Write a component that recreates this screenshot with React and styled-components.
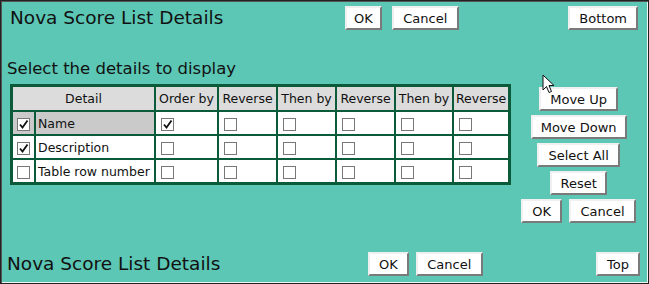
import React from "react"
import styled, { createGlobalStyle } from "styled-components"

const Global = createGlobalStyle`
    body {
        margin: 0;
        font-family: "DejaVu Sans", Verdana, sans-serif;
    }
`

const Pagina = styled.div`
    position: relative;
    box-sizing: border-box;
    width: 649px;
    height: 284px;
    background-color: #5cc7b5;
    border: 1px solid #222;
    box-shadow: inset 1px 1px 0 #555, inset -1px -1px 0 #f4f4f4;
    display: flex;
    flex-direction: column;
    color: #111;
`

const BarraTopo = styled.div`
    display: grid;
    grid-template-columns: 335px auto 1fr auto;
    align-items: center;
    padding: 5px 10px 0 9px;
`

const BarraBaixo = styled.div`
    display: grid;
    grid-template-columns: 361px auto 1fr auto;
    align-items: center;
    padding: 0 8px 7px 6px;
    margin-top: auto;
`

const Titulo = styled.div`
    font-size: 18.5px;
    line-height: 24px;
`

const Grupo = styled.div`
    display: flex;
    gap: ${p => p.gap || 7}px;
    justify-content: ${p => p.centro ? "center" : "flex-start"};
`

const Botao = styled.button`
    box-sizing: border-box;
    height: 24px;
    padding: 0 ${p => p.pad || 7}px;
    font-family: "DejaVu Sans", Verdana, sans-serif;
    font-size: 13px;
    color: #111;
    background: #fff;
    border: 2px solid;
    border-color: #f0f0f0 #7a7a7a #7a7a7a #f0f0f0;
    cursor: default;
`

const Meio = styled.div`
    display: flex;
    padding: 29px 0 0 6px;
`

const Secao = styled.div`
    display: flex;
    flex-direction: column;
`

const Subtitulo = styled.div`
    font-size: 16.5px;
    line-height: 20px;
    margin-bottom: 5px;
`

const Tabela = styled.table`
    border-collapse: collapse;
    border: 3px solid #0b5b3b;
    margin-left: 3px;
    font-size: 12.5px;
    background: #fff;
`

const Cabeca = styled.th`
    font-weight: normal;
    background: #dcdcdc;
    border: 2px solid #0b5b3b;
    height: 23px;
    padding: 0 ${p => p.w ? 2 : 1}px;
    text-align: center;
    white-space: nowrap;
    width: ${p => p.w ? p.w + "px" : "auto"};
`

const Celula = styled.td`
    background: ${p => p.marcada ? "#cacaca" : "#fff"};
    border: 2px solid #0b5b3b;
    height: 22px;
    padding: 0 ${p => p.pr ?? 0}px 0 ${p => p.pl ?? 5}px;
    text-align: left;
    white-space: nowrap;
    vertical-align: middle;
`

const Caixa = styled.span`
    display: inline-flex;
    box-sizing: border-box;
    width: 13px;
    height: 13px;
    border: 1px solid #777;
    background: #fff;
    vertical-align: middle;
    align-items: center;
    justify-content: center;
`

const Coluna = styled.div`
    flex: 1;
    display: flex;
    flex-direction: column;
    align-items: center;
    gap: 4px;
    padding: 28px 8px 0 6px;
`

const Seta = styled.svg`
    position: absolute;
    left: 541px;
    top: 73px;
`

function Check({ on }) {
    return (
        <Caixa>
            {on && (
                <svg width="11" height="11" viewBox="0 0 11 11">
                    <path d="M2 5.5 L4.5 8.5 L9.5 1.5" fill="none" stroke="#111" strokeWidth="1.8" />
                </svg>
            )}
        </Caixa>
    )
}

const linhas = [
    { nome: "Name", on: true, ordem: true, marcada: true },
    { nome: "Description", on: true, ordem: false },
    { nome: "Table row number", on: false, ordem: false },
]

const colunas = [
    ["Order by", 57],
    ["Reverse", 53],
    ["Then by", 53],
    ["Reverse", 53],
    ["Then by", 52],
    ["Reverse", 50],
]

export default function App() {
    return (
        <>
            <Global />
            <Pagina>
                <BarraTopo>
                    <Titulo>Nova Score List Details</Titulo>
                    <Grupo gap={10}>
                        <Botao pad={7}>OK</Botao>
                        <Botao pad={9.5}>Cancel</Botao>
                    </Grupo>
                    <div />
                    <Botao pad={9}>Bottom</Botao>
                </BarraTopo>

                <Meio>
                    <Secao>
                        <Subtitulo>Select the details to display</Subtitulo>
                        <Tabela>
                            <thead>
                                <tr>
                                    <Cabeca colSpan={2}>Detail</Cabeca>
                                    {colunas.map(([t, w], i) => (
                                        <Cabeca key={i} w={w}>{t}</Cabeca>
                                    ))}
                                </tr>
                            </thead>
                            <tbody>
                                {linhas.map(l => (
                                    <tr key={l.nome}>
                                        <Celula marcada={l.marcada} pl={4} style={{ width: 17 }}><Check on={l.on} /></Celula>
                                        <Celula marcada={l.marcada} pl={2} pr={2} style={{ width: 114 }}>{l.nome}</Celula>
                                        {colunas.map((c, i) => (
                                            <Celula key={i}><Check on={i === 0 && l.ordem} /></Celula>
                                        ))}
                                    </tr>
                                ))}
                            </tbody>
                        </Tabela>
                    </Secao>

                    <Coluna>
                        <Botao pad={9}>Move Up</Botao>
                        <Botao pad={8}>Move Down</Botao>
                        <Botao pad={9}>Select All</Botao>
                        <Botao pad={8}>Reset</Botao>
                        <Grupo centro>
                            <Botao pad={9}>OK</Botao>
                            <Botao pad={9.5}>Cancel</Botao>
                        </Grupo>
                    </Coluna>
                </Meio>

                <BarraBaixo>
                    <Titulo>Nova Score List Details</Titulo>
                    <Grupo>
                        <Botao pad={9}>OK</Botao>
                        <Botao pad={9.5}>Cancel</Botao>
                    </Grupo>
                    <div />
                    <Botao pad={9}>Top</Botao>
                </BarraBaixo>

                <Seta width="13" height="20" viewBox="0 0 13 20">
                    <path d="M1 1 L1 16 L4.5 12.5 L7 18.5 L9.5 17.5 L7 11.5 L12 11.5 Z" fill="#fff" stroke="#111" strokeWidth="1" strokeLinejoin="round" />
                </Seta>
            </Pagina>
        </>
    )
}
